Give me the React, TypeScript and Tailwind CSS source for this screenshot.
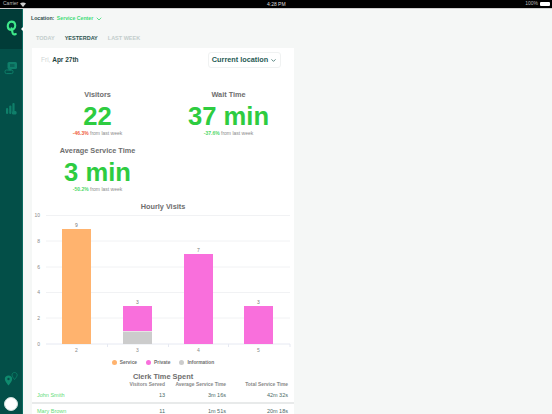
import React from 'react';
import { ChevronDown } from 'lucide-react';

const sans = 'font-["Liberation_Sans",Arial,sans-serif]';

const Stat = ({ label, value, change, up }: { label: string; value: string; change: string; up?: boolean }) => (
  <div className="flex flex-col items-center">
    <div className="text-[7.3px] leading-[11px] font-bold text-[#6e6e6e] mt-[0.5px]">{label}</div>
    <div className="mt-[2px] text-[25.6px] leading-[28px] font-bold text-[#2ecc40]">{value}</div>
    <div className="mt-[0.5px] text-[5px] leading-[7px] text-[#8a8a8a]">
      <span className={`font-bold ${up ? 'text-[#f0603c]' : 'text-[#4fd868]'}`}>{change}</span> from last week
    </div>
  </div>
);

const HourlyChart = () => {
  const grid = [
    { y: 215.5, label: '10' },
    { y: 241, label: '8' },
    { y: 267, label: '6' },
    { y: 292.5, label: '4' },
    { y: 318, label: '2' },
  ];
  return (
    <svg width="262" height="143" viewBox="32 212 262 143" className="block">
      {grid.map((g) => (
        <g key={g.label}>
          <line x1="46" x2="290" y1={g.y} y2={g.y} stroke="#f1f2f4" strokeWidth="1" />
          <text x="40" y={g.y + 1.7} fontSize="5" fill="#8a8a8a" textAnchor="end">{g.label}</text>
        </g>
      ))}
      <text x="40" y="345.7" fontSize="5" fill="#8a8a8a" textAnchor="end">0</text>
      <line x1="46" x2="290" y1="344" y2="344" stroke="#e6e9f2" strokeWidth="1" />
      {[107.5, 168.5, 228.5, 290].map((x) => (
        <line key={x} x1={x} x2={x} y1="344" y2="347" stroke="#e6e9f2" strokeWidth="1" />
      ))}
      <rect x="62" y="229" width="29" height="115" fill="#ffb36e" />
      <rect x="123" y="306" width="29" height="25" fill="#f96fdc" />
      <rect x="123" y="331.5" width="29" height="12.5" fill="#cccccc" />
      <rect x="184" y="254" width="29" height="90" fill="#f96fdc" />
      <rect x="244" y="306" width="29" height="38" fill="#f96fdc" />
      {[
        { x: 76.5, y: 226.5, t: '9' },
        { x: 137.5, y: 303.5, t: '3' },
        { x: 198.5, y: 251.5, t: '7' },
        { x: 258.5, y: 303.5, t: '3' },
      ].map((l) => (
        <text key={l.x} x={l.x} y={l.y} fontSize="5" fill="#777" textAnchor="middle">{l.t}</text>
      ))}
      {[
        { x: 76.5, t: '2' },
        { x: 137.5, t: '3' },
        { x: 198.5, t: '4' },
        { x: 258.5, t: '5' },
      ].map((l) => (
        <text key={l.x} x={l.x} y="352" fontSize="5" fill="#8a8a8a" textAnchor="middle">{l.t}</text>
      ))}
    </svg>
  );
};

const Legend = ({ color, label }: { color: string; label: string }) => (
  <div className="flex items-center gap-[3px]">
    <span className={`w-[5px] h-[5px] rounded-full ${color}`} />
    <span className="text-[4.9px] leading-[7px] font-bold text-[#6e6e6e]">{label}</span>
  </div>
);

const ClerkRow = ({ name, served, avg, total }: { name: string; served: string; avg: string; total: string }) => (
  <div className="grid grid-cols-[96px_32px_61px_62px] items-center px-[5px] h-[14px] text-[5.5px] text-[#4b6b68]">
    <span className="text-[#5fdc78]">{name}</span>
    <span className="text-right">{served}</span>
    <span className="text-right">{avg}</span>
    <span className="text-right">{total}</span>
  </div>
);

export default function App() {
  return (
    <div className={`w-[552px] h-[414px] overflow-hidden flex flex-col bg-[#f5f7f6] ${sans}`}>
      {/* status bar */}
      <div className="h-[9px] shrink-0 bg-black border-b border-b-[#cfcfcf] flex items-center justify-between pl-[3px] pr-[2px] text-[5px] text-[#bbbbbb] relative">
        <div className="flex items-center gap-[2px]">
          <span>Carrier</span>
          <svg width="6" height="5" viewBox="0 0 6 5"><path d="M0 1.6C1.6 0 4.4 0 6 1.6L3 5Z" fill="#ccc" /></svg>
        </div>
        <span className="absolute left-[267px] top-[1px] leading-[7px] text-[#dddddd]">4:28 PM</span>
        <div className="flex items-center gap-[2px]">
          <span>100%</span>
          <div className="w-[10px] h-[4px] bg-white rounded-[1px]" />
        </div>
      </div>

      <div className="flex flex-1 min-h-0">
        {/* sidebar */}
        <div className="w-[23px] shrink-0 bg-[#034f48] border-r border-r-[#0a6b60] flex flex-col items-center relative">
          <div className="h-[40px] w-full bg-[#013c38] flex items-center justify-center">
            <svg width="11" height="16" viewBox="0 0 11 16" className="mt-[-3px]">
              <path d="M5.5 1.6C3 1.6 1.6 4 1.8 6.6C2 8.8 3.4 10 5.4 10C7.8 10 9.4 7.6 9.2 5C9 3 7.6 1.6 5.5 1.6ZM5.6 8.4L6.6 13C6.9 14.4 8 14.8 9.8 14" fill="none" stroke="#3fe88a" strokeWidth="2.1" strokeLinecap="round" />
            </svg>
          </div>
          <span className="absolute right-[-2px] top-[17px] w-0 h-0 border-y-[3px] border-y-transparent border-r-[3px] border-r-white" />
          <svg width="14" height="13" viewBox="0 0 14 13" className="mt-[13px] shrink-0">
            <rect x="3.5" y="0" width="9.5" height="7" rx="1.5" fill="#0f7f6a" />
            <rect x="6" y="2" width="4.5" height="3" fill="#0a6558" />
            <rect x="1" y="8" width="8" height="3.6" rx="1.5" fill="none" stroke="#0f7f6a" strokeWidth="1" />
            <rect x="4.5" y="6.5" width="3" height="2" fill="#0f7f6a" />
          </svg>
          <svg width="11" height="12" viewBox="0 0 11 12" fill="#0f7f6a" className="mt-[28px] shrink-0">
            <rect x="0" y="5" width="2.2" height="6" rx="1" />
            <rect x="3.2" y="2.5" width="2.2" height="8.5" rx="1" />
            <rect x="6.4" y="0" width="2.2" height="9" rx="1" />
            <rect x="6" y="8" width="4.5" height="3.5" rx="1.2" />
          </svg>
          <svg width="14" height="14" viewBox="0 0 14 14" className="mt-auto mb-[11px] shrink-0">
            <path d="M4.5 3.5C6.6 3.5 8.2 5 8.2 7C8.2 9 5.6 12 4.5 13.5C3.4 12 .8 9 .8 7C.8 5 2.4 3.5 4.5 3.5Z" fill="#0f8a6e" />
            <circle cx="4.5" cy="7" r="1.2" fill="#034f48" />
            <path d="M10.5 .5C12 .5 13.2 1.7 13.2 3C13.2 4.5 11.3 6.5 10.5 7.5C9.8 6.5 8 4.5 8 3C8 1.7 9 .5 10.5 .5Z" fill="none" stroke="#0f8a6e" strokeWidth=".7" />
          </svg>
          <div className="w-[14px] h-[14px] mb-[3px] shrink-0 rounded-full bg-white border border-[#cfe0dc]" />
        </div>

        {/* main */}
        <div className="flex-1 min-w-0 pl-[9px]">
          <div className="h-[17px] flex items-center text-[5.2px] font-bold mt-[1px] ml-[-1px]">
            <span className="text-[#2f4f4d]">Location:</span>
            <span className="ml-[2.5px] text-[#3fdc78]">Service Center</span>
            <ChevronDown size={8} strokeWidth={2.5} className="ml-[1.5px] text-[#3fdc78]" />
          </div>
          <div className="h-[21px] flex items-center gap-[10px] text-[5.5px] font-bold pl-[4px] pt-[2px]">
            <span className="text-[#c3cdcc]">TODAY</span>
            <span className="text-[#2f5552]">YESTERDAY</span>
            <span className="text-[#c3cdcc]">LAST WEEK</span>
          </div>

          <div className="w-[262px] bg-white">
            <div className="flex items-start justify-between pl-[9px] pr-[13px] pt-[4px]">
              <div className="text-[6.5px] leading-[20px] font-bold h-[19px] mt-[-2px]">
                <span className="text-[#d0d6d6] font-normal">Fri, </span>
                <span className="text-[#1f4542]">Apr 27th</span>
              </div>
              <div className="h-[16px] w-[73px] flex items-center justify-center gap-[2px] border border-[#f0f2f2] rounded-[3px] text-[7.3px] font-bold text-[#1f5b55]">
                Current location
                <ChevronDown size={7} strokeWidth={2.5} />
              </div>
            </div>

            <div className="grid grid-cols-[131px_131px] pt-[19px]">
              <Stat label="Visitors" value="22" change="-46.3%" up />
              <Stat label="Wait Time" value="37 min" change="-37.6%" />
            </div>
            <div className="w-[131px] mt-[7px]">
              <Stat label="Average Service Time" value="3 min" change="-50.2%" />
            </div>

            <div className="text-center text-[7.3px] leading-[11px] font-bold text-[#6e6e6e] mt-[8px]">Hourly Visits</div>
            <HourlyChart />
            <div className="flex justify-center gap-[9px] mt-[3.5px] h-[7px] items-center">
              <Legend color="bg-[#ffb36e]" label="Service" />
              <Legend color="bg-[#f96fdc]" label="Private" />
              <Legend color="bg-[#cccccc]" label="Information" />
            </div>
            <div className="text-center text-[7.4px] leading-[8px] font-bold text-[#6e6e6e] mt-[7.5px]">Clerk Time Spent</div>
            <div className="grid grid-cols-[96px_32px_61px_62px] px-[5px] text-[4.9px] leading-[7px] font-bold text-[#888888] whitespace-nowrap">
              <span />
              <span className="justify-self-end">Visitors Served</span>
              <span className="justify-self-end">Average Service Time</span>
              <span className="justify-self-end">Total Service Time</span>
            </div>
            <div className="border-b-[2px] border-b-[#e8eaea]">
              <ClerkRow name="John Smith" served="13" avg="3m 16s" total="42m 32s" />
            </div>
            <ClerkRow name="Mary Brown" served="11" avg="1m 51s" total="20m 18s" />
          </div>
        </div>
      </div>
    </div>
  );
}
